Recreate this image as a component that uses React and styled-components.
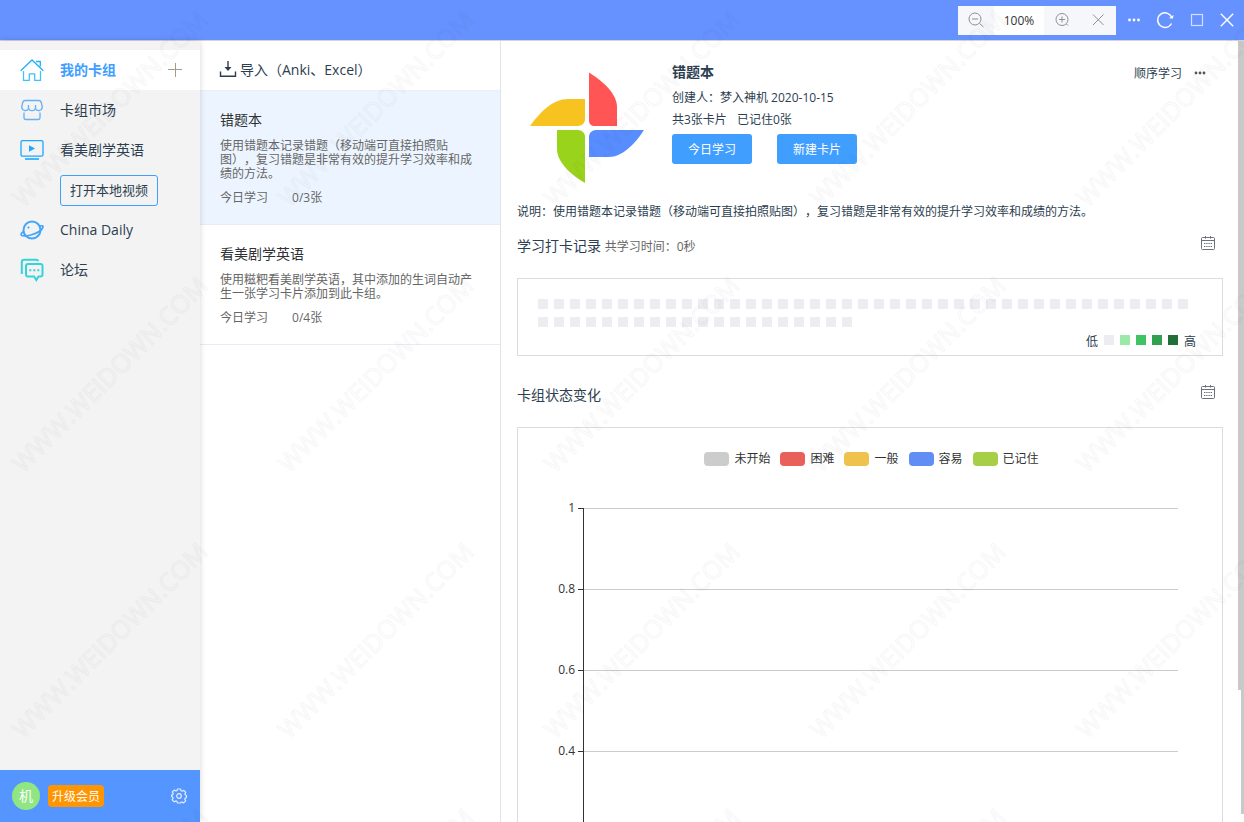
import React from "react";
import styled, { createGlobalStyle } from "styled-components";

const decks = [
  {
    id: 1,
    name: "错题本",
    text: "使用错题本记录错题（移动端可直接拍照贴图），复习错题是非常有效的提升学习效率和成绩的方法。",
    progress: "0/3张",
    active: true
  },
  {
    id: 2,
    name: "看美剧学英语",
    text: "使用糍粑看美剧学英语，其中添加的生词自动产生一张学习卡片添加到此卡组。",
    progress: "0/4张",
    active: false
  }
];

const levels = ["#ebedf0", "#9be9a8", "#40c463", "#30a14e", "#216e39"];

const series = [
  { name: "未开始", color: "#cccccc" },
  { name: "困难", color: "#e9605a" },
  { name: "一般", color: "#eec24c" },
  { name: "容易", color: "#608ef5" },
  { name: "已记住", color: "#a6cf47" }
];

const axisValues = ["1", "0.8", "0.6", "0.4", "0.2", "0"];

const days = Array.from({ length: 61 }, (_, i) => i);

export default function App() {
  return (
    <>
      <GlobalStyle />
      <Page>
        <TitleBar />
        <Body>
          <Sidebar />
          <DeckList />
          <DeckDetail />
        </Body>
        <OuterThumb />
        <InnerThumb />
        <Watermark />
      </Page>
    </>
  );
}

function TitleBar() {
  return (
    <Bar>
      <ZoomGroup>
        <ZoomButton aria-label="缩小">
          <svg width="16" height="16" viewBox="0 0 16 16">
            <circle cx="7" cy="7" r="6" />
            <path d="M4 7h6M11.500 11.500L15.500 15" />
          </svg>
        </ZoomButton>
        <ZoomValue>100%</ZoomValue>
        <ZoomButton aria-label="放大">
          <svg width="16" height="16" viewBox="0 0 16 16">
            <circle cx="8" cy="7.500" r="6" />
            <path d="M5 7.500h6M8 4.500v6M12.500 12l1.500 1.500" />
          </svg>
        </ZoomButton>
        <ZoomButton aria-label="重置缩放">
          <svg width="16" height="16" viewBox="0 0 16 16">
            <path d="M3 2.500l10.500 10.500M13.500 2.500L3 13" />
          </svg>
        </ZoomButton>
      </ZoomGroup>
      <WindowButtons>
        <IconButton aria-label="更多">
          <svg width="12" height="16" viewBox="0 0 12 16" fill="#fff">
            <circle cx="1.500" cy="8" r="1.400" />
            <circle cx="6" cy="8" r="1.400" />
            <circle cx="10.500" cy="8" r="1.400" />
          </svg>
        </IconButton>
        <IconButton aria-label="刷新">
          <svg width="18" height="18" viewBox="0 0 18 18" fill="none" stroke="#fff" strokeWidth="1.4">
            <path d="M15.500 12.500A7.300 7.300 0 1 1 16 7" />
            <path d="M13 7.200l4 .4.500-3.600z" fill="#fff" stroke="none" />
          </svg>
        </IconButton>
        <IconButton aria-label="最大化">
          <svg width="14" height="14" viewBox="0 0 14 14" fill="none" stroke="#d3dfff" strokeWidth="1.2">
            <rect x="1.500" y="1.500" width="11" height="11" />
          </svg>
        </IconButton>
        <IconButton aria-label="关闭">
          <svg width="14" height="14" viewBox="0 0 14 14" stroke="#fff" strokeWidth="1.4">
            <path d="M.8.8l12.400 12.400M13.200.8L.8 13.200" />
          </svg>
        </IconButton>
      </WindowButtons>
    </Bar>
  );
}

function Sidebar() {
  return (
    <Side>
      <Nav>
        <NavRow $active>
          <NavLink href="#decks" $active>
            <HomeIcon />
            我的卡组
          </NavLink>
          <IconButton aria-label="新建卡组">
            <svg width="14" height="14" viewBox="0 0 14 14" stroke="#a89a86">
              <path d="M0 6.500h14M7.500 0v14" />
            </svg>
          </IconButton>
        </NavRow>
        <NavRow>
          <NavLink href="#market">
            <ShopIcon />
            卡组市场
          </NavLink>
        </NavRow>
        <NavRow>
          <NavLink href="#shows">
            <VideoIcon />
            看美剧学英语
          </NavLink>
        </NavRow>
        <NavRow>
          <LocalVideoButton>打开本地视频</LocalVideoButton>
        </NavRow>
        <NavRow>
          <NavLink href="#daily">
            <PlanetIcon />
            China Daily
          </NavLink>
        </NavRow>
        <NavRow>
          <NavLink href="#forum">
            <ForumIcon />
            论坛
          </NavLink>
        </NavRow>
      </Nav>
      <Account>
        <Avatar>机</Avatar>
        <UpgradeButton>升级会员</UpgradeButton>
        <IconButton aria-label="设置">
          <GearIcon />
        </IconButton>
      </Account>
    </Side>
  );
}

function DeckList() {
  return (
    <List>
      <ImportButton>
        <svg width="18" height="18" viewBox="0 0 18 18" fill="none" stroke="#2c3e50" strokeWidth="1.4">
          <path d="M1.500 11.500v4.800h15v-4.800M9 1v8" />
          <path d="M5.500 7h7L9 11z" fill="#2c3e50" stroke="none" />
        </svg>
        导入（Anki、Excel）
      </ImportButton>
      {decks.map(deck => (
        <Deck key={deck.id} $active={deck.active}>
          <DeckName>{deck.name}</DeckName>
          <DeckText>{deck.text}</DeckText>
          <DeckMeta>
            <span>今日学习</span>
            <span>{deck.progress}</span>
          </DeckMeta>
        </Deck>
      ))}
    </List>
  );
}

function DeckDetail() {
  return (
    <Detail>
      <Hero>
        <Pinwheel />
        <HeroInfo>
          <HeroTitle>错题本</HeroTitle>
          <HeroLine>创建人：梦入神机 2020-10-15</HeroLine>
          <HeroLine>
            <span>共3张卡片</span>
            <span>已记住0张</span>
          </HeroLine>
          <HeroButtons>
            <PrimaryButton>今日学习</PrimaryButton>
            <PrimaryButton>新建卡片</PrimaryButton>
          </HeroButtons>
        </HeroInfo>
        <OrderMenu>
          <TextButton>顺序学习</TextButton>
          <IconButton aria-label="更多操作">
            <svg width="12" height="14" viewBox="0 0 12 14" fill="#555">
              <circle cx="2" cy="6" r="1.400" />
              <circle cx="6" cy="6" r="1.400" />
              <circle cx="10" cy="6" r="1.400" />
            </svg>
          </IconButton>
        </OrderMenu>
      </Hero>
      <Description>说明：{decks[0].text}</Description>

      <SectionHead $gap={14}>
        <SectionTitle>
          学习打卡记录 <small>共学习时间：0秒</small>
        </SectionTitle>
        <IconButton aria-label="选择日期">
          <CalendarIcon />
        </IconButton>
      </SectionHead>
      <HeatBox>
        <HeatGrid>
          {days.map(day => (
            <Cell key={day} $color={levels[0]} />
          ))}
        </HeatGrid>
        <HeatLegend>
          <span>低</span>
          {levels.map(color => (
            <Cell key={color} $color={color} />
          ))}
          <span>高</span>
        </HeatLegend>
      </HeatBox>

      <SectionHead $gap={29}>
        <SectionTitle>卡组状态变化</SectionTitle>
        <IconButton aria-label="选择日期">
          <CalendarIcon />
        </IconButton>
      </SectionHead>
      <ChartBox>
        <ChartLegend>
          {series.map(item => (
            <LegendItem key={item.name}>
              <Swatch $color={item.color} />
              {item.name}
            </LegendItem>
          ))}
        </ChartLegend>
        <Chart viewBox="0 0 704 470">
          {axisValues.map((value, i) => (
            <g key={value}>
              <path d={`M66 ${i * 81 + 30.5}H660`} stroke="#ccc" />
              <path d={`M60 ${i * 81 + 30.5}h6`} stroke="#333" />
              <text x="57" y={i * 81 + 34} textAnchor="end">
                {value}
              </text>
            </g>
          ))}
          <path d="M65.500 30v406" stroke="#333" />
        </Chart>
      </ChartBox>
    </Detail>
  );
}

function HomeIcon() {
  return (
    <svg width="24" height="24" viewBox="0 0 24 24" fill="none" stroke="#1fb1ff" strokeWidth="1.3">
      <path d="M.7 12.700L12 2l11.300 10.700M16 3.500h4.300v5" />
      <path d="M3.500 13v9.300h5.800v-6.500h5.400v6.500h5.800V13" stroke="#3fc4f5" />
    </svg>
  );
}

function ShopIcon() {
  return (
    <svg width="24" height="24" viewBox="0 0 24 24" fill="none" stroke="#66b1f5" strokeWidth="1.3">
      <path d="M5 2.500h14c1.500 0 2 .8 2.400 2.500l.8 3.500c.4 4-4.800 5.500-6.700 2.300-1.300 2.500-5.700 2.500-7 0C6.600 14 1.400 12.500 1.800 8.500L2.600 5C3 3.300 3.500 2.500 5 2.500z" />
      <path d="M8.500 11V7M15.500 11V7M4 14.500v5c0 1.300.7 2 2 2h12c1.300 0 2-.7 2-2v-5" />
    </svg>
  );
}

function VideoIcon() {
  return (
    <svg width="24" height="24" viewBox="0 0 24 24" fill="none" stroke="#1ba8ff" strokeWidth="1.3">
      <rect x="1" y="2.700" width="22" height="15.500" rx="1.500" />
      <path d="M5 21h14" strokeWidth="1.600" />
      <path d="M9 7.300v6.500l6-3.200z" fill="#1ba8ff" stroke="none" />
    </svg>
  );
}

function PlanetIcon() {
  return (
    <svg width="24" height="24" viewBox="0 0 24 24" fill="none" stroke="#45a5f7" strokeWidth="2">
      <circle cx="12" cy="12" r="8.500" />
      <path d="M19.500 8c2.500-.6 3.700-.2 3.500 1-.5 3-6 6.200-11.500 7.700C6 18.200 1 18.500 1 16.500c0-1 1-2.200 2.800-3.300" strokeWidth="1.700" />
      <circle cx="8.500" cy="9.500" r="1.100" fill="#45a5f7" stroke="none" />
    </svg>
  );
}

function ForumIcon() {
  return (
    <svg width="24" height="24" viewBox="0 0 24 24" fill="none" stroke="#36d3d8" strokeWidth="2">
      <path d="M1.800 16V4.200C1.800 2.500 2.500 1.800 4.200 1.800h12.300c1 0 1.500.4 1.500 1.500" />
      <path d="M8 6h12.500c1.300 0 2 .7 2 2v8.500c0 1.300-.7 2-2 2h-2L16.300 22l-2.200-3.500H8c-1.300 0-2-.7-2-2V8c0-1.300.7-2 2-2z" />
      <path d="M9.300 12.300h2M13.300 12.300h2M17.300 12.300h2" />
    </svg>
  );
}

function GearIcon() {
  return (
    <svg width="16" height="16" viewBox="0 0 16 16" fill="none" stroke="#e4eeff" strokeWidth="1.200">
      <path d="M6.500 1h3l.5 1.700 1.200.5 1.600-.9 2 2-.9 1.600.5 1.100 1.100.5v2l-1.300.6-.4 1.100.9 1.700-2 2-1.700-.9-1 .4L9.500 15h-3L6 13.300 4.800 12.900l-1.600.9-2-2 .9-1.600-.4-1.100L.6 8.500V7l1.200-.4.4-1.100-.9-1.600 1.900-1.800 1.700.9L6 2.700z" strokeLinejoin="round" />
      <circle cx="8" cy="8" r="2.300" />
    </svg>
  );
}

function CalendarIcon() {
  return (
    <svg width="14" height="14" viewBox="0 0 14 14" fill="none" stroke="#6b7178">
      <rect x=".5" y="1.500" width="13" height="12" rx="1" />
      <path d="M.5 4.500h13M4.500 0v2.500M9.500 0v2.500" />
      <path d="M3 7.500h8M3 10.500h8" strokeDasharray="1.400 .8" />
    </svg>
  );
}

function Pinwheel() {
  return (
    <PinwheelSvg width="114" height="112" viewBox="0 0 114 112">
      <path fill="#ff5555" d="M59 .5C73 9 87 22 87 35v19H65c-4 0-6-2-6-6z" />
      <path fill="#f6c321" d="M0 54c10-14 23-27 38-27h17v20c0 4-3 7-7 7z" />
      <path fill="#9ad31c" d="M27 58h21c4 0 7 3 7 7v46C40 102 27 90 27 77z" />
      <path fill="#588dff" d="M59 85V65c0-4 3-7 7-7h48c-9 14-22 27-35 27z" />
    </PinwheelSvg>
  );
}

function Watermark() {
  return (
    <WatermarkSvg aria-hidden="true">
      <defs>
        <pattern id="mark" y="6" width="266" height="266" patternUnits="userSpaceOnUse">
          <text transform="translate(23 202) rotate(-45)">WWW.WEIDOWN.COM</text>
        </pattern>
      </defs>
      <rect width="100%" height="100%" fill="url(#mark)" />
    </WatermarkSvg>
  );
}

const GlobalStyle = createGlobalStyle`
  * {
    box-sizing: border-box;
  }

  body {
    margin: 0;
    color: #2c3e50;
    background: #fff;
    font-family: "Open Sans", "Noto Sans CJK SC", sans-serif;
    font-size: 14px;
    text-spacing-trim: space-all;
  }

  button {
    padding: 0;
    border: 0;
    background: none;
    color: inherit;
    font: inherit;
    cursor: pointer;
  }

  svg {
    display: block;
    flex: none;
  }

  h1, h2, p {
    margin: 0;
  }
`;

const Page = styled.div`
  position: relative;
  display: flex;
  flex-direction: column;
  height: 100vh;
  overflow: hidden;
`;

const Bar = styled.header`
  display: flex;
  align-items: center;
  justify-content: flex-end;
  gap: 12px;
  height: 41px;
  flex: none;
  padding-right: 10px;
  background: #6692ff;
  border-bottom: 1px solid #d4d4d4;
`;

const ZoomGroup = styled.div`
  display: flex;
  height: 29px;
  background: #f5f7fa;
`;

const ZoomButton = styled.button`
  display: flex;
  align-items: center;
  justify-content: center;
  width: 36px;

  svg {
    fill: none;
    stroke: #8d9095;
  }
`;

const ZoomValue = styled.span`
  width: 50px;
  background: #fff;
  color: #333;
  font-size: 12px;
  line-height: 29px;
  text-align: center;
`;

const IconButton = styled.button`
  display: flex;
  align-items: center;
  justify-content: center;
`;

const WindowButtons = styled.div`
  display: flex;
  align-items: center;
  gap: 16px;
`;

const Body = styled.div`
  display: flex;
  flex: 1;
  min-height: 0;
`;

const Side = styled.aside`
  z-index: 1;
  display: flex;
  flex-direction: column;
  justify-content: space-between;
  width: 200px;
  flex: none;
  background: #f3f3f3;
  box-shadow: 0 0 6px rgba(0, 0, 0, 0.16);
`;

const Nav = styled.nav`
  padding-top: 9px;
`;

const NavRow = styled.div`
  display: flex;
  align-items: center;
  justify-content: space-between;
  height: 40px;
  padding: 0 18px 0 20px;
  background: ${props => (props.$active ? "#fff" : "transparent")};
`;

const NavLink = styled.a`
  display: flex;
  align-items: center;
  gap: 16px;
  color: ${props => (props.$active ? "#409eff" : "#2c3e50")};
  font-weight: ${props => (props.$active ? "bold" : "normal")};
  line-height: 18px;
  text-decoration: none;
`;

const LocalVideoButton = styled.button`
  height: 31px;
  margin-left: 40px;
  padding: 0 9px 2px;
  border: 1px solid #409eff;
  border-radius: 3px;
  font-size: 13px;
`;

const Account = styled.div`
  display: flex;
  align-items: center;
  gap: 8px;
  height: 52px;
  padding: 0 13px 0 12px;
  background: #5595ff;

  > :last-child {
    margin-left: auto;
  }
`;

const Avatar = styled.span`
  width: 28px;
  border-radius: 50%;
  background: #8fe682;
  color: #fff;
  line-height: 28px;
  text-align: center;
`;

const UpgradeButton = styled.button`
  height: 22px;
  padding: 0 4px;
  border-radius: 4px;
  background: #ff9500;
  color: #fff;
  font-size: 12px;
`;

const List = styled.section`
  width: 301px;
  flex: none;
  border-right: 1px solid #e4e4e4;
`;

const ImportButton = styled.button`
  display: flex;
  align-items: center;
  gap: 3px;
  width: 100%;
  height: 50px;
  padding: 7px 19px 0;
  border-bottom: 1px solid #ebeef5;
`;

const Deck = styled.article`
  padding: 20px 20px 19px;
  border-bottom: 1px solid #e6ebf5;
  background: ${props => (props.$active ? "#ecf5ff" : "#fff")};
`;

const DeckName = styled.h2`
  color: #303133;
  font-size: 14px;
  font-weight: normal;
  line-height: 18px;
`;

const DeckText = styled.p`
  margin: 10px 0;
  color: #666;
  font-size: 12px;
  line-height: 14px;
`;

const DeckMeta = styled.div`
  display: flex;
  gap: 24px;
  color: #666;
  font-size: 12px;
  line-height: 14px;
`;

const Detail = styled.main`
  flex: 1;
  min-width: 0;
  padding: 22px 21px 20px 16px;
  overflow-y: auto;
  scrollbar-width: none;
`;

const Hero = styled.div`
  display: flex;
  align-items: flex-start;
`;

const PinwheelSvg = styled.svg`
  margin: 9px 28px 0 13px;
`;

const HeroInfo = styled.div`
  flex: 1;
`;

const HeroTitle = styled.h1`
  margin-bottom: 6px;
  font-size: 14px;
  font-weight: bold;
  line-height: 18px;
`;

const HeroLine = styled.p`
  display: flex;
  gap: 10px;
  font-size: 12px;
  line-height: 22px;
`;

const HeroButtons = styled.div`
  display: flex;
  gap: 25px;
  margin-top: 3px;
`;

const PrimaryButton = styled.button`
  width: 80px;
  height: 30px;
  border-radius: 3px;
  background: #409eff;
  color: #fff;
  font-size: 12px;
`;

const OrderMenu = styled.div`
  display: flex;
  gap: 12px;
  padding-right: 17px;
`;

const TextButton = styled.button`
  font-size: 12px;
  line-height: 22px;
`;

const Description = styled.p`
  margin-top: 18px;
  font-size: 12px;
  line-height: 20px;
`;

const SectionHead = styled.div`
  display: flex;
  align-items: flex-start;
  justify-content: space-between;
  margin: ${props => props.$gap}px 8px 22px 0;
`;

const SectionTitle = styled.h2`
  font-size: 14px;
  font-weight: normal;
  line-height: 20px;

  small {
    color: #666;
    font-size: 12px;
    line-height: 14px;
  }
`;

const HeatBox = styled.div`
  padding: 20px 20px 6px;
  border: 1px solid #dcdcdc;
`;

const HeatGrid = styled.div`
  display: flex;
  flex-wrap: wrap;
  gap: 8px 6px;
`;

const Cell = styled.i`
  width: 10px;
  height: 10px;
  background: ${props => props.$color};
`;

const HeatLegend = styled.div`
  display: flex;
  justify-content: flex-end;
  gap: 6px;
  margin-top: 8px;
  padding-right: 6px;
  font-size: 12px;
  line-height: 14px;
`;

const ChartBox = styled.div`
  padding-top: 22px;
  border: 1px solid #dcdcdc;
`;

const ChartLegend = styled.div`
  display: flex;
  justify-content: center;
  gap: 10px;
  padding-left: 3px;
`;

const LegendItem = styled.span`
  display: flex;
  align-items: center;
  gap: 5px;
  color: #333;
  font-size: 12px;
  line-height: 18px;
`;

const Swatch = styled.i`
  width: 25px;
  height: 14px;
  border-radius: 4px;
  background: ${props => props.$color};
`;

const Chart = styled.svg`
  width: 100%;
  margin-top: 10px;

  text {
    fill: #333;
    font-size: 12px;
  }
`;

// scroll thumbs lie over the right edge of the detail pane
const InnerThumb = styled.div`
  position: absolute;
  top: 41px;
  right: 0;
  width: 6px;
  height: 79%;
  background: #c9c9c9;
`;

const OuterThumb = styled(InnerThumb)`
  width: 3px;
  height: 94%;
`;

const WatermarkSvg = styled.svg`
  position: absolute;
  z-index: 2;
  inset: 0;
  width: 100%;
  height: 100%;
  pointer-events: none;

  text {
    fill: none;
    stroke: rgba(0, 0, 0, 0.035);
    font-size: 25px;
  }
`;
